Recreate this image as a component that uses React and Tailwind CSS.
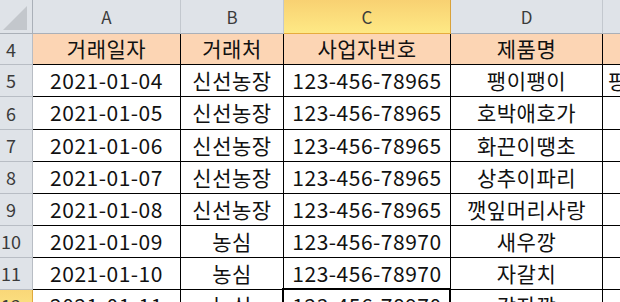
const rows = [
  { n: 5, h: 'h-[32px]', date: '2021-01-04', vendor: '신선농장', biz: '123-456-78965', item: '팽이팽이', extra: '팡이' },
  { n: 6, h: 'h-[33px]', date: '2021-01-05', vendor: '신선농장', biz: '123-456-78965', item: '호박애호가' },
  { n: 7, h: 'h-[32px]', date: '2021-01-06', vendor: '신선농장', biz: '123-456-78965', item: '화끈이땡초' },
  { n: 8, h: 'h-[32px]', date: '2021-01-07', vendor: '신선농장', biz: '123-456-78965', item: '상추이파리' },
  { n: 9, h: 'h-[32px]', date: '2021-01-08', vendor: '신선농장', biz: '123-456-78965', item: '깻잎머리사랑' },
  { n: 10, h: 'h-[32px]', date: '2021-01-09', vendor: '농심', biz: '123-456-78970', item: '새우깡' },
  { n: 11, h: 'h-[32px]', date: '2021-01-10', vendor: '농심', biz: '123-456-78970', item: '자갈치' },
];

const cell = 'flex shrink-0 items-center justify-center border-r border-b border-black whitespace-nowrap';

const RowHead = ({ children, active }) => (
  <div
    className={
      'flex w-[33px] shrink-0 items-center border-r border-b text-[18px] tracking-normal text-[#3b3b3b] ' +
      (active
        ? 'border-[#e0a93c] bg-linear-to-b from-[#f9d778] to-[#fde98a]'
        : 'border-[#b8bdc4] bg-[#dfe3e8]')
    }
  >
    <span className="w-[22px] text-center">{children}</span>
  </div>
);

export default function App() {
  return (
    <div className="h-[302px] w-[620px] overflow-hidden bg-white font-['Noto_Sans_CJK_KR','Noto_Sans',sans-serif] text-[21px] tracking-[0.5px] text-[#111]">
      {/* column letters */}
      <div className="flex h-[34px] text-[17px] tracking-normal text-[#3b3b3b]">
        <div className="flex w-[33px] shrink-0 items-end justify-end border-r border-b border-[#aab0b8] bg-[#dfe3e8] pr-[5px] pb-[3px]">
          <svg width="24" height="24" viewBox="0 0 24 24">
            <polygon points="24,0 24,24 0,24" fill="#c3c7cc" />
          </svg>
        </div>
        <div className="flex w-[148px] shrink-0 items-center justify-center border-r border-b border-r-[#c3c8ce] border-b-[#aab0b8] bg-[#dfe3e8]">A</div>
        <div className="flex w-[103px] shrink-0 items-center justify-center border-r border-b border-r-[#c3c8ce] border-b-[#aab0b8] bg-[#dfe3e8]">B</div>
        <div className="flex w-[167px] shrink-0 items-center justify-center border-r border-b border-r-[#d9a23a] border-b-[#e6ac3e] bg-linear-to-b from-[#f8d172] to-[#fee985]">C</div>
        <div className="flex w-[152px] shrink-0 items-center justify-center border-r border-b border-r-[#c3c8ce] border-b-[#aab0b8] bg-[#dfe3e8]">D</div>
        <div className="flex-1 border-b border-[#aab0b8] bg-[#dfe3e8]" />
      </div>

      {/* field titles */}
      <div className="flex h-[31px]">
        <RowHead>4</RowHead>
        <div className={cell + ' w-[148px] bg-[#fcd5b4]'}>거래일자</div>
        <div className={cell + ' w-[103px] bg-[#fcd5b4]'}>거래처</div>
        <div className={cell + ' w-[167px] bg-[#fcd5b4]'}>사업자번호</div>
        <div className={cell + ' w-[152px] bg-[#fcd5b4]'}>제품명</div>
        <div className="flex-1 border-b border-black bg-[#fcd5b4]" />
      </div>

      {rows.map((r) => (
        <div key={r.n} className={'flex ' + r.h}>
          <RowHead>{r.n}</RowHead>
          <div className={cell + ' w-[148px]'}>{r.date}</div>
          <div className={cell + ' w-[103px]'}>{r.vendor}</div>
          <div className={cell + ' w-[167px]'}>{r.biz}</div>
          <div className={cell + ' w-[152px]'}>{r.item}</div>
          <div className="flex flex-1 items-center overflow-hidden border-b border-black pl-[5px] whitespace-nowrap">
            {r.extra}
          </div>
        </div>
      ))}

      {/* selected row */}
      <div className="flex h-[32px]">
        <RowHead active>12</RowHead>
        <div className={cell + ' w-[148px]'}>2021-01-11</div>
        <div className={cell + ' w-[103px]'}>농심</div>
        <div className={cell + ' relative w-[167px]'}>
          123-456-78970
          <div className="absolute -top-[2px] -left-[2px] -right-[1px] -bottom-[1px] border-2 border-black" />
        </div>
        <div className={cell + ' w-[152px]'}>감자깡</div>
        <div className="flex-1 border-b border-black" />
      </div>
    </div>
  );
}
